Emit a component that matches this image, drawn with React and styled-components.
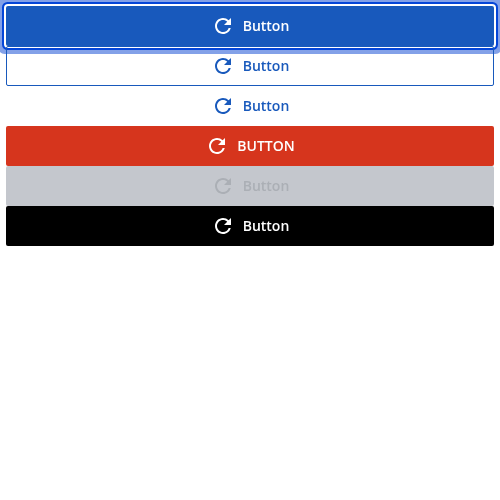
import React from "react";
import styled, { createGlobalStyle, css } from "styled-components";

const GlobalStyle = createGlobalStyle`
  body { margin: 0; background: #fff; }
  *, *::before, *::after { box-sizing: border-box; }
`;

const Stack = styled.main`
  display: flex;
  flex-direction: column;
  padding: 6px;
  will-change: transform;
`;

const variants = {
  primary: css`background: #1859bc; color: #fff;`,
  outlined: css`background: transparent; color: #1859bc; border-color: #1859bc;`,
  text: css`background: transparent; color: #1859bc;`,
  danger: css`background: #d6351d; color: #fff; text-transform: uppercase;`,
  disabled: css`background: #c4c7cd; color: #abafb5;`,
  dark: css`background: #000; color: #fff;`,
};

const Button = styled.button`
  display: flex;
  align-items: center;
  justify-content: center;
  gap: 8px;
  width: 100%;
  height: 40px;
  margin: 0;
  padding: 0 16px;
  border: 1px solid transparent;
  border-radius: 2px;
  font: 600 14px/20px "Open Sans", sans-serif;
  outline: none;
  ${({ $variant }) => variants[$variant]}
  ${({ $focused }) => $focused && css`
    box-shadow: 0 0 0 2px #fff, 0 0 0 4px #0546d8, 0 0 0 8px #83a1e8;
  `}
`;

const Icon = styled.svg`
  width: 24px;
  height: 24px;
  flex: none;
  fill: currentColor;
`;

const RefreshIcon = () => (
  <Icon viewBox="0 0 24 24" aria-hidden="true">
    <path d="M17.65 6.35A7.958 7.958 0 0 0 12 4c-4.42 0-7.99 3.58-7.99 8s3.57 8 7.99 8c3.73 0 6.84-2.55 7.73-6h-2.08A5.99 5.99 0 0 1 12 18c-3.31 0-6-2.69-6-6s2.69-6 6-6c1.66 0 3.14.69 4.22 1.78L13 11h7V4l-2.35 2.35z" />
  </Icon>
);

const buttons = ["primary", "outlined", "text", "danger", "disabled", "dark"];

export default function App() {
  return (
    <>
      <GlobalStyle />
      <Stack>
        {buttons.map((variant) => (
          <Button key={variant} $variant={variant} $focused={variant === "primary"} disabled={variant === "disabled"}>
            <RefreshIcon />
            Button
          </Button>
        ))}
      </Stack>
    </>
  );
}
